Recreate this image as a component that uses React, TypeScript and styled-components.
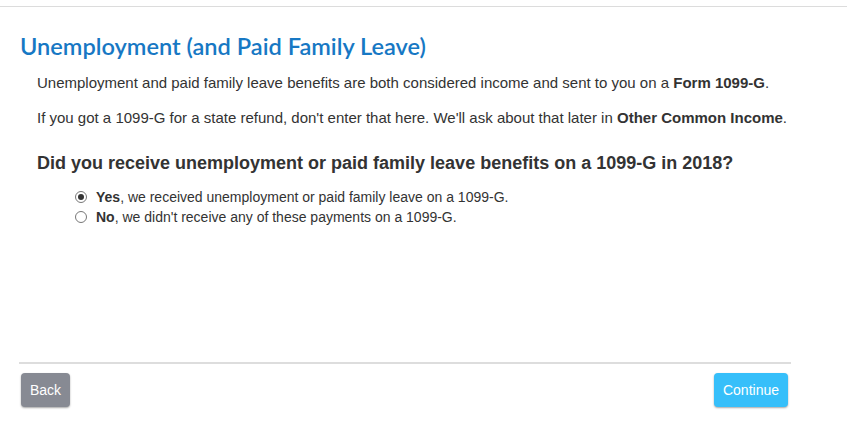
import React, { useState } from "react";
import styled, { createGlobalStyle } from "styled-components";

const GlobalStyle = createGlobalStyle`
  html, body { margin: 0; padding: 0; background: #fff; }
  body { font-family: "Liberation Sans", Arial, sans-serif; color: #333; }
`;

const Page = styled.div`
  width: 847px;
  height: 434px;
  border-top: 1px solid #dcdcdc;
  margin-top: 6px;
  box-sizing: border-box;
  display: flex;
  flex-direction: column;
`;

const Main = styled.div`
  width: 772px;
  padding: 0 0 0 19px;
  display: flex;
  flex-direction: column;
`;

const Title = styled.h1`
  margin: 25px 0 0 1px;
  font-family: Lato, "Open Sans", sans-serif;
  font-weight: 600;
  font-size: 23.6px;
  line-height: 28px;
  color: #1778c4;
`;

const Body = styled.div`
  padding-left: 18px;
  display: flex;
  flex-direction: column;
`;

const Para = styled.p`
  margin: 0;
  font-size: 15px;
  line-height: 20px;
  color: #333;
  & + & { margin-top: 15px; }
  &:first-child { margin-top: 13px; }
`;

const Question = styled.h2`
  margin: 23px 0 0;
  font-size: 18px;
  font-weight: bold;
  line-height: 24px;
  color: #333;
`;

const Options = styled.div`
  margin-top: 12px;
  padding-left: 38px;
  display: flex;
  flex-direction: column;
`;

const Option = styled.label`
  display: flex;
  align-items: center;
  gap: 9px;
  font-size: 14px;
  line-height: 20px;
  color: #333;
  cursor: pointer;
`;

const Radio = styled.span<{ $checked: boolean }>`
  width: 12px;
  height: 12px;
  border-radius: 50%;
  border: 1px solid #777;
  box-sizing: border-box;
  display: inline-flex;
  align-items: center;
  justify-content: center;
  background: #fff;
  &::after {
    content: "";
    width: 6px;
    height: 6px;
    border-radius: 50%;
    background: ${(p) => (p.$checked ? "#333" : "transparent")};
  }
`;

const Footer = styled.div`
  margin-top: auto;
  margin-bottom: 33px;
  margin-left: 19px;
  width: 772px;
  border-top: 2px solid #dddddd;
  padding-top: 9px;
  display: flex;
  justify-content: space-between;
`;

const Button = styled.button<{ $primary?: boolean }>`
  height: 34px;
  padding: 0 9px;
  margin: ${(p) => (p.$primary ? "0 3px 0 0" : "0 0 0 2px")};
  border: none;
  border-radius: 4px;
  font-family: "Liberation Sans", Arial, sans-serif;
  font-size: 14px;
  color: #fff;
  background: ${(p) => (p.$primary ? "#36bffa" : "#878a93")};
  box-shadow: 0 1px 2px rgba(0, 0, 0, 0.35);
  cursor: pointer;
`;

export default function App() {
  const [value, setValue] = useState("yes");
  return (
    <>
      <GlobalStyle />
      <Page>
        <Main>
          <Title>Unemployment (and Paid Family Leave)</Title>
          <Body>
            <Para>
              Unemployment and paid family leave benefits are both considered income and sent to you on a{" "}
              <b>Form 1099-G</b>.
            </Para>
            <Para>
              If you got a 1099-G for a state refund, don't enter that here. We'll ask about that later in{" "}
              <b>Other Common Income</b>.
            </Para>
            <Question>Did you receive unemployment or paid family leave benefits on a 1099-G in 2018?</Question>
            <Options>
              <Option onClick={() => setValue("yes")}>
                <Radio $checked={value === "yes"} />
                <span>
                  <b>Yes</b>, we received unemployment or paid family leave on a 1099-G.
                </span>
              </Option>
              <Option onClick={() => setValue("no")}>
                <Radio $checked={value === "no"} />
                <span>
                  <b>No</b>, we didn't receive any of these payments on a 1099-G.
                </span>
              </Option>
            </Options>
          </Body>
        </Main>
        <Footer>
          <Button>Back</Button>
          <Button $primary>Continue</Button>
        </Footer>
      </Page>
    </>
  );
}
